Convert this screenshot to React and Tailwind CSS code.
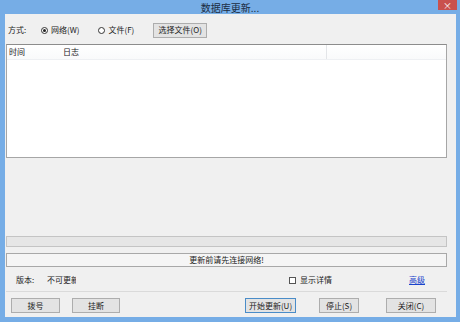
import React from 'react';

const font = { fontFamily: '"Noto Sans CJK SC", "Liberation Sans", sans-serif' };

const Btn = ({ children, w, primary }) => (
  <div
    className={`h-[15px] ${w} flex items-center justify-center bg-[#e3e3e3] border text-[8px] text-[#222] leading-none ${
      primary ? 'border-[#4a8cc8]' : 'border-[#adadad]'
    }`}
  >
    {children}
  </div>
);

const Radio = ({ checked, label }) => (
  <div className="flex items-center gap-[3px]">
    <div className="w-[7px] h-[7px] rounded-full border border-[#333] bg-white flex items-center justify-center">
      {checked && <div className="w-[3px] h-[3px] rounded-full bg-[#222]" />}
    </div>
    <span>{label}</span>
  </div>
);

const App = () => {
  return (
    <div className="w-[460px] h-[322px] bg-[#76ade6] flex flex-col" style={font}>
      {/* Title bar */}
      <div className="h-[14px] flex items-center relative">
        <div className="flex-1 text-center text-[10px] text-[#1b2c42] leading-none pt-[1px]">
          数据库更新...
        </div>
        <div className="absolute right-[3px] top-0 w-[19px] h-[10px] bg-[#c9514d] flex items-center justify-center text-white text-[9px] leading-none">
          ×
        </div>
      </div>

      {/* Body */}
      <div className="flex-1 mr-[4px] mb-[5px] ml-[5px] bg-[#f0f0f0] pl-[1px] pr-[9px] flex flex-col text-[8px] text-[#222]">
        {/* Mode row */}
        <div className="mt-[8px] h-[16px] flex items-center">
          <span className="ml-[2px] w-[33px]">方式:</span>
          <Radio checked label="网络(W)" />
          <div className="ml-[19px]">
            <Radio label="文件(F)" />
          </div>
          <div className="ml-[19px]">
            <Btn w="w-[54px]">选择文件(O)</Btn>
          </div>
        </div>

        {/* Log list */}
        <div className="mt-[6px] h-[114px] bg-white border border-[#a6a6a6] border-t-[#8c8c8c] flex flex-col">
          <div className="h-[15px] flex border-b border-[#eef0f3] bg-gradient-to-b from-white to-[#f9fafb]">
            <div className="w-[56px] pl-[2px] flex items-center">时间</div>
            <div className="w-[264px] border-r border-[#e3e5e8] flex items-center">日志</div>
            <div className="flex-1" />
          </div>
        </div>

        <div className="flex-1" />

        {/* Progress */}
        <div className="h-[11px] bg-[#e6e6e6] border border-[#c4c4c4]" />

        {/* Status */}
        <div className="mt-[6px] h-[14px] bg-[#f5f5f5] border border-[#a8a8a8] flex items-center justify-center">
          更新前请先连接网络!
        </div>

        {/* Version row */}
        <div className="h-[25px] pt-[2px] flex items-center border-b border-[#dadada]">
          <span className="ml-[10px] w-[31px]">版本:</span>
          <span className="w-[29px] overflow-hidden whitespace-nowrap">不可更新</span>
          <div className="ml-[213px] flex items-center gap-[4px]">
            <div className="w-[7px] h-[7px] border border-[#555] bg-white" />
            <span>显示详情</span>
          </div>
          <span className="ml-[77px] text-[#1a44cc] underline">高级</span>
        </div>

        {/* Buttons */}
        <div className="mt-[6px] flex items-center">
          <div className="ml-[5px]">
            <Btn w="w-[49px]">拨号</Btn>
          </div>
          <div className="ml-[12px]">
            <Btn w="w-[48px]">挂断</Btn>
          </div>
          <div className="ml-[125px]">
            <Btn w="w-[51px]" primary>开始更新(U)</Btn>
          </div>
          <div className="ml-[23px]">
            <Btn w="w-[40px]">停止(S)</Btn>
          </div>
          <div className="ml-[27px]">
            <Btn w="w-[50px]">关闭(C)</Btn>
          </div>
        </div>
        <div className="h-[4px]" />
      </div>
    </div>
  );
};

export default App;
